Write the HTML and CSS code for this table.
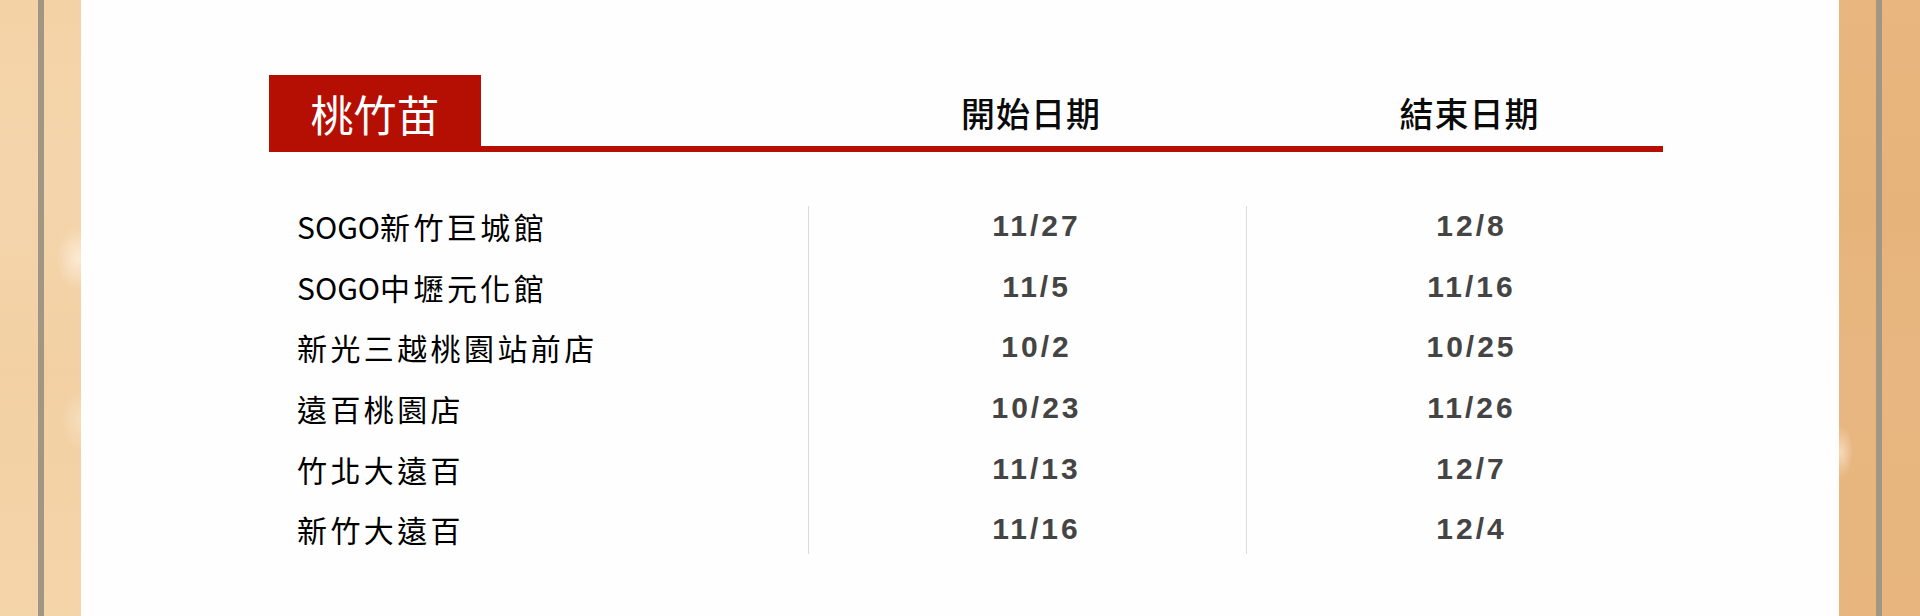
FILE: index.html
```html
<!DOCTYPE html>
<html lang="zh-Hant">
<head>
<meta charset="utf-8">
<title>桃竹苗</title>
<link rel="stylesheet" href="styles.css">
</head>
<body>
<div class="page">
  <div class="strip strip-left"><div class="rail"></div></div>
  <main class="panel">
    <section class="schedule">
      <div class="head">
        <div class="head-region"><div class="tab">桃竹苗</div></div>
        <div class="head-cell head-start">開始日期</div>
        <div class="head-cell head-end">結束日期</div>
      </div>
      <div class="body">
        <div class="col col-name">
          <div class="row"><span class="latin">SOGO</span>新竹巨城館</div>
          <div class="row"><span class="latin">SOGO</span>中壢元化館</div>
          <div class="row">新光三越桃園站前店</div>
          <div class="row">遠百桃園店</div>
          <div class="row">竹北大遠百</div>
          <div class="row">新竹大遠百</div>
        </div>
        <div class="col col-date col-start">
          <div class="row">11/27</div>
          <div class="row">11/5</div>
          <div class="row">10/2</div>
          <div class="row">10/23</div>
          <div class="row">11/13</div>
          <div class="row">11/16</div>
        </div>
        <div class="col col-date col-end">
          <div class="row">12/8</div>
          <div class="row">11/16</div>
          <div class="row">10/25</div>
          <div class="row">11/26</div>
          <div class="row">12/7</div>
          <div class="row">12/4</div>
        </div>
      </div>
    </section>
  </main>
  <div class="strip strip-right"><div class="rail"></div></div>
</div>
</body>
</html>
```
FILE: styles.css
```css
* { box-sizing: border-box; }
html, body { margin: 0; padding: 0; }
body {
  width: 1920px;
  height: 616px;
  overflow: hidden;
  background: #ffffff;
  font-family: "Noto Sans CJK TC", "Noto Sans", sans-serif;
}
.page {
  display: flex;
  width: 1920px;
  height: 616px;
}
.strip {
  width: 81px;
  height: 616px;
  flex: none;
  display: flex;
}
.strip-left {
  background:
    radial-gradient(ellipse 22px 32px at 78px 258px, rgba(253, 238, 220, 0.85), rgba(253, 238, 220, 0) 100%),
    radial-gradient(ellipse 18px 30px at 80px 420px, rgba(250, 230, 205, 0.6), rgba(250, 230, 205, 0) 100%),
    linear-gradient(180deg, #f3d2a6 0%, #f4d5ab 30%, #f2d0a4 60%, #f4d4a9 100%);
  padding-left: 38px;
}
.strip-right {
  background:
    radial-gradient(ellipse 12px 26px at 2px 452px, rgba(248, 220, 190, 0.9), rgba(248, 220, 190, 0) 100%),
    linear-gradient(180deg, #e8b67e 0%, #e6b37b 35%, #e8b781 60%, #e7b57d 100%);
  padding-left: 37px;
}
.rail {
  width: 6px;
  height: 100%;
  background: #a19684;
}
.panel {
  flex: 1;
  background: #fefefe;
  padding: 75px 0 0 188px;
}
.schedule {
  width: 1425px;
}
.head {
  display: flex;
  width: 1394px;
  height: 77px;
  border-bottom: 6px solid #b50f03;
}
.head-region {
  width: 539px;
  flex: none;
}
.tab {
  width: 212px;
  height: 71px;
  background: #b50f03;
  color: #ffffff;
  font-size: 43px;
  font-weight: 400;
  text-align: center;
  padding-top: 6px;
  line-height: 65px;
}
.head-cell {
  font-size: 34px;
  font-weight: 500;
  line-height: 71px;
  padding-top: 2px;
  color: #0a0a0a;
  text-align: center;
  letter-spacing: 1px;
}
.head-start {
  width: 438px;
  padding-left: 8px;
}
.head-end {
  width: 417px;
  padding-left: 30px;
}
.body {
  display: flex;
  margin-top: 54px;
}
.col {
  display: flex;
  flex-direction: column;
  gap: 20.7px;
  padding-bottom: 5px;
}
.col-name {
  width: 539px;
  padding-left: 28px;
  font-size: 30px;
  letter-spacing: 3.4px;
  color: #000000;
}
.latin {
  letter-spacing: 0;
}
.col-date {
  border-left: 1px solid #dcdcdc;
  font-family: "Liberation Sans", Arial, sans-serif;
  font-weight: 700;
  font-size: 30px;
  letter-spacing: 3px;
  color: #444444;
  text-align: center;
}
.col-start {
  width: 438px;
  padding-left: 18px;
}
.col-end {
  width: 448px;
  padding-left: 2px;
}
.row {
  height: 40px;
  line-height: 40px;
  white-space: nowrap;
}
```
